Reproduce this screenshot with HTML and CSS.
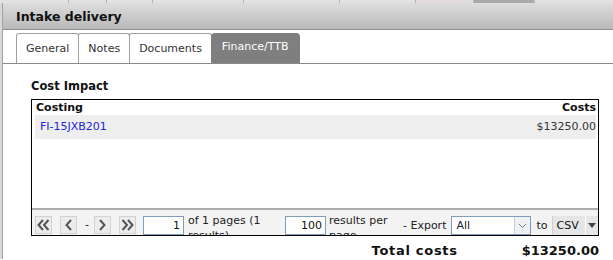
FILE: index.html
```html
<!DOCTYPE html>
<html lang="en">
<head>
    <meta charset="UTF-8">
    <meta name="viewport" content="width=device-width, initial-scale=1.0">
    <title>Intake delivery</title>
    <link rel="stylesheet" href="styles.css">
</head>
<body>

    <!-- Remsa av sidan bakom dialogen -->
    <div class="backdrop">
        <span class="cell" style="width:68px"></span>
        <span class="cell" style="width:37px"></span>
        <span class="cell" style="width:45px"></span>
        <span class="cell" style="width:90px"></span>
        <span class="cell" style="width:95px"></span>
        <span class="cell" style="width:75px"></span>
        <span class="cell pink" style="width:57px"></span>
        <span class="cell dark" style="width:59px"></span>
        <span class="cell"></span>
    </div>

    <div class="window">
        <div class="title-bar">Intake delivery</div>

        <div class="tabs">
            <div class="tab">General</div>
            <div class="tab">Notes</div>
            <div class="tab">Documents</div>
            <div class="tab active">Finance/TTB</div>
        </div>

        <div class="content">
            <h2>Cost Impact</h2>

            <div class="grid-box">
                <div class="grid-area">
                    <div class="grid-head">
                        <span>Costing</span>
                        <span>Costs</span>
                    </div>
                    <div class="grid-row">
                        <a href="#" class="link">FI-15JXB201</a>
                        <span>$13250.00</span>
                    </div>
                </div>

                <div class="pager">
                    <span class="pbtn">
                        <svg width="13" height="12" viewBox="0 0 13 12"><path d="M6 1 L1.5 6 L6 11 M11.5 1 L7 6 L11.5 11" fill="none" stroke="#555" stroke-width="2"/></svg>
                    </span>
                    <span class="pbtn">
                        <svg width="8" height="12" viewBox="0 0 8 12"><path d="M6 1 L1.5 6 L6 11" fill="none" stroke="#555" stroke-width="2"/></svg>
                    </span>
                    <span class="dash">-</span>
                    <span class="pbtn">
                        <svg width="8" height="12" viewBox="0 0 8 12"><path d="M2 1 L6.5 6 L2 11" fill="none" stroke="#555" stroke-width="2"/></svg>
                    </span>
                    <span class="pbtn last">
                        <svg width="13" height="12" viewBox="0 0 13 12"><path d="M1.5 1 L6 6 L1.5 11 M7 1 L11.5 6 L7 11" fill="none" stroke="#555" stroke-width="2"/></svg>
                    </span>
                    <input class="num" type="text" value="1">
                    <span class="ptext pages">of 1 pages (1 results).</span>
                    <input class="num" type="text" value="100">
                    <span class="ptext per">results per page</span>
                    <span class="ptext export">- Export</span>
                    <span class="select">
                        <span class="select-val">All</span>
                        <span class="select-arrow">
                            <svg width="9" height="6" viewBox="0 0 9 6"><path d="M1 1 L4.5 4.5 L8 1" fill="none" stroke="#777" stroke-width="1"/></svg>
                        </span>
                    </span>
                    <span class="ptext to">to</span>
                    <span class="csv">
                        <span class="csv-val">CSV</span>
                        <span class="csv-arrow">
                            <svg width="8" height="5" viewBox="0 0 8 5"><path d="M0 0 L8 0 L4 5 Z" fill="#444"/></svg>
                        </span>
                    </span>
                </div>
            </div>

            <div class="totals">
                <span class="total-label">Total costs</span>
                <span class="total-value">$13250.00</span>
            </div>
        </div>
    </div>

</body>
</html>
```

FILE: styles.css
```css
/* Grundstil */
body {
    margin: 0;
    padding: 0;
    background-color: #fff;
    font-family: "DejaVu Sans", Verdana, sans-serif;
    font-size: 11px;
    color: #222;
    overflow: hidden;
}

.backdrop {
    display: flex;
    height: 3px;
    background-color: #e2e2e2;
}

.backdrop .cell {
    border-right: 1px solid #b4b4b4;
    background-color: #e2e2e2;
}

.backdrop .pink {
    background-color: #e2dcdc;
}

.backdrop .dark {
    background-color: #a9a9a9;
}

.window {
    margin-left: 2px;
    border-left: 1px solid #a2a2a2;
    box-shadow: -2px 0 0 #d8d8d8;
}

.title-bar {
    height: 26px;
    line-height: 27px;
    padding-left: 13px;
    font-size: 12.5px;
    font-weight: bold;
    color: #111;
    background: linear-gradient(#dddddd, #b9b9b9);
    border-bottom: 1px solid #8e8e8e;
}

/* Flikar */
.tabs {
    display: flex;
    padding: 3px 0 0 13px;
    border-bottom: 1px solid #8a8a8a;
}

.tab {
    height: 29px;
    line-height: 30px;
    padding: 0 9px;
    border: 1px solid #a0a0a0;
    border-bottom: none;
    border-radius: 3px 3px 0 0;
    margin-right: -1px;
    background-color: #fff;
    color: #333;
}

.tab.active {
    background-color: #7f7f7f;
    border-color: #7f7f7f;
    color: #fff;
    line-height: 26px;
    padding: 0 11px 0 10px;
    border-radius: 4px 4px 0 0;
}

/* Innehåll */
.content {
    padding: 0 14px 0 28px;
}

h2 {
    margin: 14px 0 5px;
    font-size: 11.5px;
    line-height: 16px;
    color: #111;
}

.grid-box {
    border: 1px solid #000;
}

.grid-area {
    height: 108px;
    padding: 0 2px 0 3px;
}

.grid-head {
    display: flex;
    justify-content: space-between;
    height: 15px;
    line-height: 15px;
    padding-left: 1px;
    font-weight: bold;
    color: #111;
}

.grid-row {
    display: flex;
    justify-content: space-between;
    height: 24px;
    line-height: 24px;
    padding-left: 5px;
    background-color: #eeeeee;
    color: #333;
}

.link {
    color: #2323dd;
    text-decoration: none;
}

/* Sidväljare */
.pager {
    display: flex;
    align-items: flex-start;
    height: 19px;
    padding: 6px 0 0 3px;
    overflow: hidden;
    background-color: #f3f3f3;
    border-top: 2px solid #ababab;
}

.pager > * {
    flex-shrink: 0;
    white-space: nowrap;
}

.pbtn {
    box-sizing: border-box;
    display: flex;
    align-items: center;
    justify-content: center;
    width: 17px;
    height: 18px;
    margin-right: 8px;
    background-color: #ececec;
    border: 1px solid #d2d2d2;
}

.pbtn.last {
    margin-right: 7px;
}

.dash {
    margin: 1px 5px 0 0;
    line-height: 16px;
}

.num {
    box-sizing: border-box;
    height: 19px;
    width: 41px;
    margin: 0;
    padding: 0 3px;
    border: 1px solid #7f9db9;
    font-family: inherit;
    font-size: 11px;
    text-align: right;
    color: #111;
    background-color: #fff;
}

.ptext {
    line-height: 15px;
    margin-top: -3px;
    color: #222;
}

.pages,
.per {
    white-space: normal !important;
}

.pages {
    width: 97px;
    margin-left: 4px;
}

.per {
    width: 72px;
    margin-left: 3px;
}

.export {
    margin-top: 2px;
    margin-left: 2px;
    margin-right: 5px;
}

.select {
    box-sizing: border-box;
    display: flex;
    width: 80px;
    height: 19px;
    border: 1px solid #7f9db9;
    background-color: #fff;
}

.select-val {
    flex: 1;
    padding-left: 4px;
    line-height: 17px;
}

.select-arrow {
    display: flex;
    align-items: center;
    justify-content: center;
    width: 15px;
    background-color: #eef0f4;
    border-left: 1px solid #c8d0dc;
}

.to {
    margin: 2px 4px 0 5px;
}

.csv {
    display: flex;
    height: 19px;
    width: 45px;
    background-color: #e6e6e6;
    border-left: 1px solid #d0d0d0;
}

.csv-val {
    flex: 1;
    padding-left: 4px;
    line-height: 19px;
    color: #111;
}

.csv-arrow {
    display: flex;
    align-items: center;
    justify-content: center;
    width: 12px;
    border-left: 1px solid #fff;
}

/* Summering */
.totals {
    display: flex;
    justify-content: flex-end;
    padding-top: 6px;
    font-size: 13px;
    font-weight: bold;
    line-height: 17px;
    color: #111;
}

.total-label {
    letter-spacing: 0.7px;
}

.total-value {
    margin-left: 64px;
}
```
